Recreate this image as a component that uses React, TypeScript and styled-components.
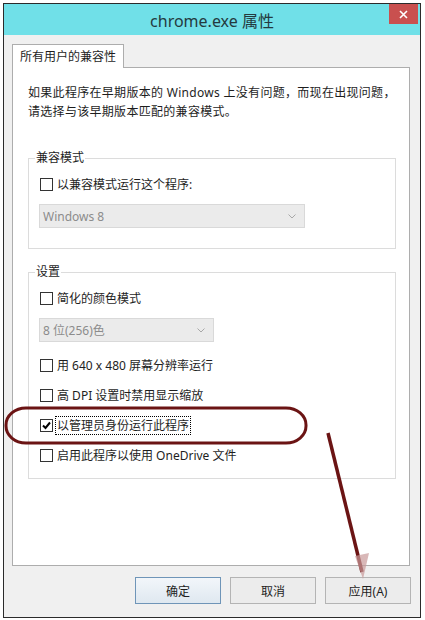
import * as React from 'react'
import styled, { createGlobalStyle } from 'styled-components'

const GlobalStyle = createGlobalStyle`
  body {
    margin: 0;
    background: #fff;
    font-family: "Noto Sans", "Noto Sans CJK SC", sans-serif;
    color: #1e1e1e;
  }
`

const Chevron = () => (
  <svg width="8" height="5" viewBox="0 0 8 5">
    <path d="M0.5 0.5 L4 4 L7.5 0.5" fill="none" stroke="#a8a8a8" strokeWidth="1" />
  </svg>
)

const Option = ({ label, checked, focused }: { label: string; checked?: boolean; focused?: boolean }) => (
  <Row>
    <Box>
      {checked && (
        <svg width="11" height="11" viewBox="0 0 11 11">
          <path d="M2 5.5 L4.5 8 L9 2.5" fill="none" stroke="#000" strokeWidth="2" />
        </svg>
      )}
    </Box>
    <Label focused={focused}>{label}</Label>
  </Row>
)

export default () => {
  return (
    <>
      <GlobalStyle />
      <Page>
        <Window>
          <TitleBar>
            <span />
            <Title>chrome.exe 属性</Title>
            <CloseButton>
              <svg width="9" height="9" viewBox="0 0 9 9">
                <path d="M1 1 L8 8 M8 1 L1 8" stroke="#fff" strokeWidth="1.6" />
              </svg>
            </CloseButton>
          </TitleBar>
          <Body>
            <TabStrip>
              <Tab>所有用户的兼容性</Tab>
            </TabStrip>
            <Panel>
              <Intro>
                如果此程序在早期版本的 Windows 上没有问题，而现在出现问题，
                <br />
                请选择与该早期版本匹配的兼容模式。
              </Intro>
              <Group>
                <Legend>兼容模式</Legend>
                <Option label="以兼容模式运行这个程序:" />
                <Select width={266}>
                  <span>Windows 8</span>
                  <Chevron />
                </Select>
              </Group>
              <Group spaced>
                <Legend>设置</Legend>
                <Option label="简化的颜色模式" />
                <Select width={175}>
                  <span>8 位(256)色</span>
                  <Chevron />
                </Select>
                <Stack>
                  <Option label="用 640 x 480 屏幕分辨率运行" />
                  <Option label="高 DPI 设置时禁用显示缩放" />
                  <Option label="以管理员身份运行此程序" checked focused />
                  <Option label="启用此程序以使用 OneDrive 文件" />
                </Stack>
              </Group>
            </Panel>
            <Footer>
              <Button primary>确定</Button>
              <Button>取消</Button>
              <Button>应用(A)</Button>
            </Footer>
          </Body>
        </Window>
        <Annotation width="425" height="620" viewBox="0 0 425 620">
          <rect x="6" y="408" width="300" height="35" rx="20" ry="17" fill="none" stroke="#6b1414" strokeWidth="3" />
          <line x1="328" y1="433" x2="362" y2="572" stroke="#6b1414" strokeWidth="3.5" />
          <polygon points="355,556 369,553 363,579" fill="#c99a9a" opacity="0.7" />
        </Annotation>
      </Page>
    </>
  )
}

const Page = styled.div`
  position: relative;
  width: 425px;
  height: 620px;
  padding: 3px;
  box-sizing: border-box;
`

const Window = styled.div`
  width: 418px;
  height: 615px;
  box-sizing: border-box;
  border: 1px solid #2b2b2b;
  background: #f0f0f0;
  display: flex;
  flex-direction: column;
  overflow: hidden;
`

const TitleBar = styled.div`
  height: 31px;
  background: #70e0e8;
  display: grid;
  grid-template-columns: 1fr auto 1fr;
  align-items: center;
`

const Title = styled.div`
  font-size: 16px;
  color: #243a40;
  padding-top: 1px;
`

const CloseButton = styled.div`
  justify-self: end;
  align-self: start;
  width: 29px;
  height: 20px;
  margin-right: 2px;
  background: #c9504f;
  display: flex;
  align-items: center;
  justify-content: center;
`

const Body = styled.div`
  padding: 9px 8px 0;
`

const TabStrip = styled.div`
  display: flex;
`

const Tab = styled.div`
  height: 24px;
  box-sizing: border-box;
  padding: 0 7px;
  border: 1px solid #adadad;
  border-bottom: none;
  background: #fff;
  font-size: 12px;
  line-height: 23px;
  margin-bottom: -1px;
  position: relative;
`

const Panel = styled.div`
  width: 398px;
  height: 499px;
  box-sizing: border-box;
  border: 1px solid #adadad;
  background: #fff;
  padding: 15px 13px 0 15px;
`

const Intro = styled.p`
  margin: 0 0 29px;
  font-size: 12px;
  line-height: 19px;
  letter-spacing: 0.3px;
`

const Group = styled.fieldset<{ spaced?: boolean }>`
  margin: ${p => (p.spaced ? '15px' : '0')} 0 0;
  padding: 8px 11px ${p => (p.spaced ? '13px' : '20px')} 11px;
  border: 1px solid #dcdcdc;
  min-width: 0;
`

const Legend = styled.legend`
  padding: 0 1px;
  margin-left: -5px;
  font-size: 12px;
  line-height: 16px;
`

const Row = styled.div`
  display: flex;
  align-items: center;
  height: 20px;
  gap: 4px;
  font-size: 12px;
`

const Box = styled.div`
  width: 13px;
  height: 13px;
  box-sizing: border-box;
  border: 1px solid #333;
  background: #fff;
  display: flex;
  align-items: center;
  justify-content: center;
`

const Label = styled.span<{ focused?: boolean }>`
  line-height: 17px;
  padding: 0 1px;
  margin-left: -1px;
  outline: ${p => (p.focused ? '1px dotted #000' : 'none')};
`

const Select = styled.div<{ width: number }>`
  width: ${p => p.width}px;
  height: 24px;
  box-sizing: border-box;
  margin: 10px 0 0 -1px;
  padding: 0 8px 0 3px;
  border: 1px solid #d9d9d9;
  background: #ebebeb;
  color: #8c8c8c;
  font-size: 12px;
  display: flex;
  align-items: center;
  justify-content: space-between;
`

const Stack = styled.div`
  display: flex;
  flex-direction: column;
  gap: 10px;
  margin-top: 13px;
`

const Footer = styled.div`
  display: flex;
  justify-content: flex-end;
  gap: 9px;
  margin-top: 11px;
  padding-right: 1px;
`

const Button = styled.div<{ primary?: boolean }>`
  width: 86px;
  height: 27px;
  box-sizing: border-box;
  border: 1px solid ${p => (p.primary ? '#6f95b8' : '#b4b4b4')};
  background: ${p => (p.primary ? 'linear-gradient(#f2f6fa, #dfe8f0)' : '#ececec')};
  font-size: 12px;
  display: flex;
  align-items: center;
  justify-content: center;
`

const Annotation = styled.svg`
  position: absolute;
  top: 0;
  left: 0;
  pointer-events: none;
`
